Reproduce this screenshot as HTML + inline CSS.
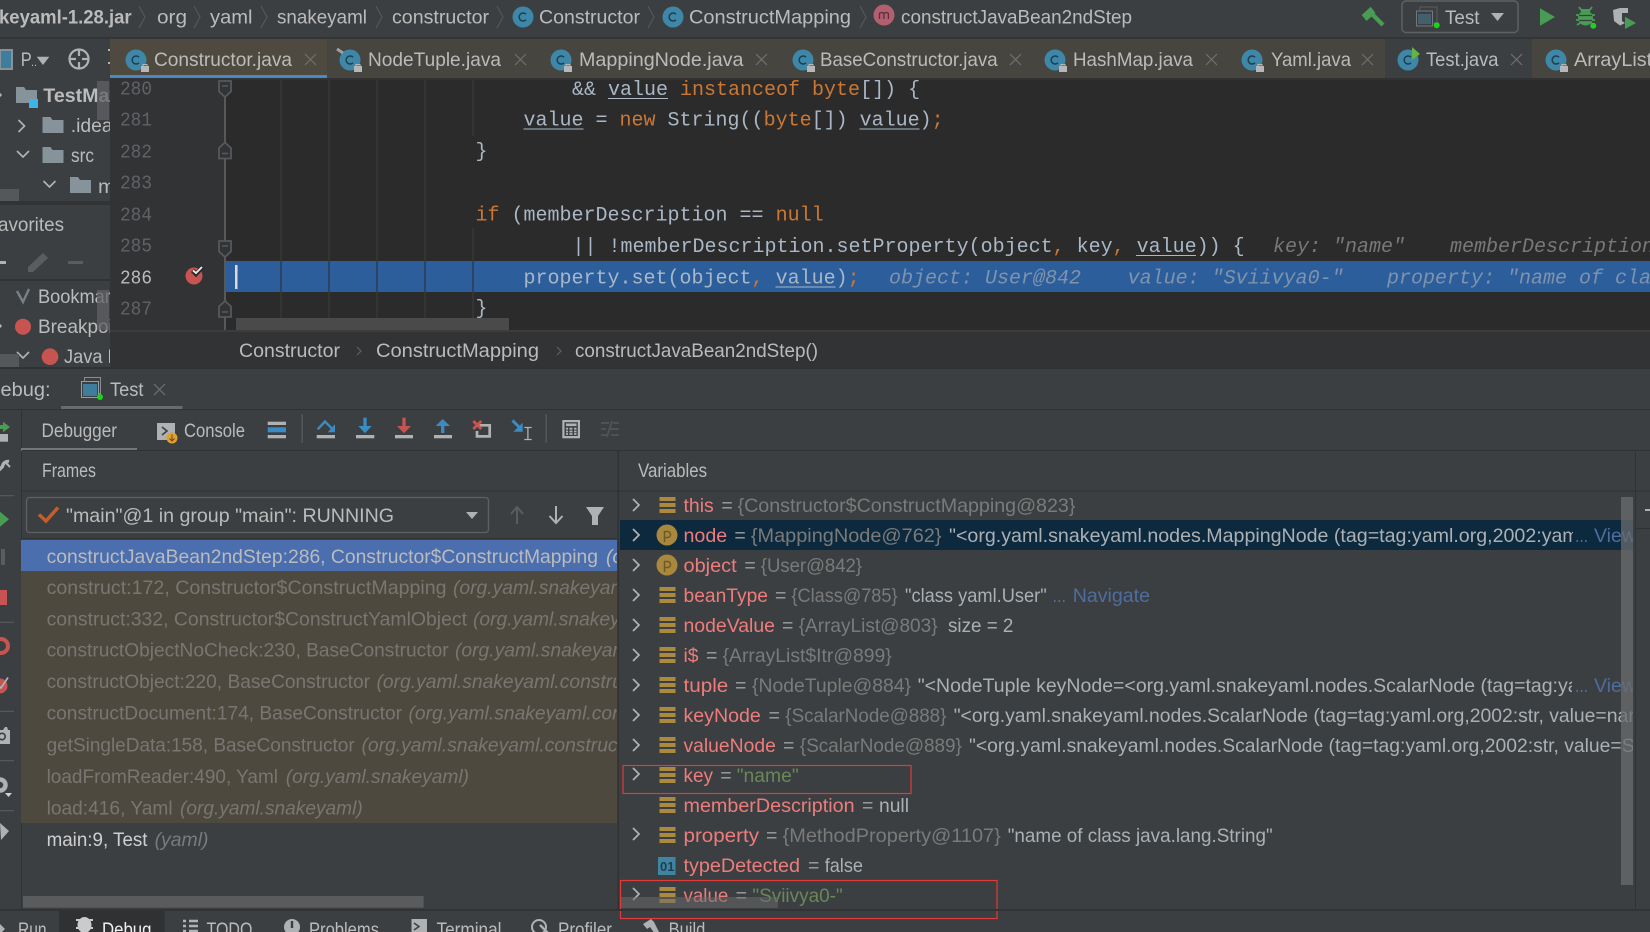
<!DOCTYPE html>
<html><head><meta charset="utf-8"><style>
html,body{margin:0;padding:0;background:#3c3f41;width:1650px;height:932px;overflow:hidden}
svg{display:block}
text{white-space:pre;font-family:"Liberation Sans",sans-serif;font-size:19.5px;fill:#bbb}
.m,.m text{font-family:"Liberation Mono",monospace;font-size:20px;fill:#a9b7c6}
.k{fill:#cc7832}
.ln{font-family:"Liberation Mono",monospace;font-size:19px;fill:#606366}
.h{font-family:"Liberation Mono",monospace;font-size:20px;font-style:italic;fill:#787878}
.h2{font-family:"Liberation Mono",monospace;font-size:20px;font-style:italic;fill:#7f93ab}
.n{fill:#ee7c7c}.e{fill:#a0a0a0}.g{fill:#7a7a7a}.s{fill:#aab0b4}.gr{fill:#6a8759}.l{fill:#4e6d9f}
.d{fill:#787670}.i{font-style:italic}.w{fill:#d5d5d5}
</style></head><body>
<svg width="1650" height="932" viewBox="0 0 1650 932" xmlns="http://www.w3.org/2000/svg">
<defs>
<symbol id="ci" viewBox="0 0 22 22" width="22" height="22"><circle cx="11" cy="11" r="10.5" fill="#3e87a8"/><path d="M14 8.2A4 4 0 1 0 14 13.8" fill="none" stroke="#1d3f4f" stroke-width="1.5"/></symbol>
<symbol id="lk" viewBox="0 0 8 9" width="8" height="9"><rect y="3" width="8" height="6" fill="#b5b7b9"/><path d="M2 3V1.5h4V3" fill="none" stroke="#b5b7b9"/></symbol>
<symbol id="bars" viewBox="0 0 16 16" width="16" height="16"><rect width="16" height="4" y="0" fill="#ab8a40"/><rect width="16" height="4" y="6" fill="#ab8a40"/><rect width="16" height="4" y="12" fill="#ab8a40"/></symbol>
<symbol id="p" viewBox="0 0 22 22" width="22" height="22"><circle cx="11" cy="11" r="10.5" fill="#a9873d"/><path d="M8.5 18V7M8.5 7.5h3a3 3 0 0 1 0 6H8.5" fill="none" stroke="#6b5a2c" stroke-width="1.5"/></symbol>
<symbol id="chev" viewBox="0 0 8 14" width="8" height="14"><path d="M1 1L7 7L1 13" fill="none" stroke="#afb1b3" stroke-width="1.7"/></symbol>
<symbol id="chd" viewBox="0 0 14 8" width="14" height="8"><path d="M1 1L7 7L13 1" fill="none" stroke="#afb1b3" stroke-width="1.7"/></symbol>
<symbol id="fold" viewBox="0 0 14 18" width="14" height="18"><path d="M1 1H13V11.5L7 17L1 11.5Z" fill="#313335" stroke="#56585a" stroke-width="1.8"/><path d="M4 6H10" stroke="#56585a" stroke-width="1.6"/></symbol>
<symbol id="foldu" viewBox="0 0 14 18" width="14" height="18"><path d="M1 17H13V6.5L7 1L1 6.5Z" fill="#313335" stroke="#56585a" stroke-width="1.8"/><path d="M4 12H10" stroke="#56585a" stroke-width="1.6"/></symbol>
<symbol id="fd" viewBox="0 0 21 16" width="21" height="16"><path d="M0 0H8L10 3H21V16H0Z" fill="#87939b"/></symbol>
<symbol id="cfg" viewBox="0 0 22 23" width="22" height="23"><rect x="3.5" y="0.5" width="16" height="16" fill="none" stroke="#8a8d8f"/><rect x="0.5" y="4.5" width="17" height="16" fill="#3c3f41" stroke="#9a9d9f"/><rect x="2" y="7" width="14" height="12" fill="#3e7d9b"/><circle cx="19" cy="20" r="3" fill="#1fd01f"/></symbol>
<clipPath id="edc"><rect x="110" y="80" width="1540" height="251"/></clipPath>
<clipPath id="tabc"><rect x="0" y="39" width="1650" height="36"/></clipPath>
<clipPath id="sb"><rect x="0" y="80" width="110" height="288"/></clipPath>
<clipPath id="fr"><rect x="21" y="540" width="596" height="310"/></clipPath>
<clipPath id="v2"><rect x="620" y="495" width="1013" height="400"/></clipPath>
<clipPath id="bot"><rect x="0" y="911" width="1650" height="21"/></clipPath>
</defs>

<rect width="1650" height="932" fill="#3c3f41"/>
<!-- top bar -->
<rect y="37" width="1650" height="2" fill="#323436"/>
<text x="-1" y="23.5" font-weight="bold" textLength="132.6" lengthAdjust="spacingAndGlyphs">keyaml-1.28.jar</text>
<g fill="none" stroke="#56595b" stroke-width="1.1"><path d="M139 6L145 17L139 28"/><path d="M194 6L200 17L194 28"/><path d="M261 6L267 17L261 28"/><path d="M376 6L382 17L376 28"/><path d="M497 6L503 17L497 28"/><path d="M648 6L654 17L648 28"/><path d="M860 6L866 17L860 28"/></g>
<text x="157" y="23.5" textLength="30" lengthAdjust="spacingAndGlyphs">org</text>
<text x="210" y="23.5" textLength="42.5" lengthAdjust="spacingAndGlyphs">yaml</text>
<text x="277" y="23.5" textLength="90" lengthAdjust="spacingAndGlyphs">snakeyaml</text>
<text x="392" y="23.5" textLength="97" lengthAdjust="spacingAndGlyphs">constructor</text>
<use href="#ci" x="512" y="6"/>
<text x="539" y="23.5" textLength="101" lengthAdjust="spacingAndGlyphs">Constructor</text>
<use href="#ci" x="662" y="6"/>
<text x="689" y="23.5" textLength="162" lengthAdjust="spacingAndGlyphs">ConstructMapping</text>
<circle cx="884" cy="15" r="10.5" fill="#b0606f"/><path d="M879.5 19V12.5M879.5 13.5q2.2-2 4.4 0V19M884 13.5q2.2-2 4.4 0V19" fill="none" stroke="#5e2f3a" stroke-width="1.3"/>
<text x="901" y="23.5" textLength="231" lengthAdjust="spacingAndGlyphs">constructJavaBean2ndStep</text>
<path d="M1361.7 15L1370.7 6.7L1375.5 13L1366.5 21Z" fill="#499c54"/><path d="M1371 13L1383 25" stroke="#499c54" stroke-width="4.2"/>
<rect x="1402" y="1" width="116" height="31.5" rx="4" fill="#3c3f41" stroke="#5e6264" stroke-width="1.4"/>
<rect x="1420" y="7" width="17" height="16" fill="none" stroke="#5a5d5f"/>
<rect x="1416.5" y="11" width="16" height="15" fill="#3c3f41" stroke="#75787a"/><rect x="1418" y="14" width="13" height="10" fill="#44606d"/>
<circle cx="1436.7" cy="25.3" r="3" fill="#1fd01f"/>
<text x="1445" y="24" textLength="34.5" lengthAdjust="spacingAndGlyphs">Test</text>
<path d="M1491 13H1504L1497.5 21Z" fill="#afb1b3"/>
<path d="M1540 8.3L1555 17L1540 25.7Z" fill="#499c54"/>
<g fill="#499c54"><ellipse cx="1585.5" cy="18" rx="7.5" ry="7.5"/><rect x="1581" y="9" width="9" height="5"/></g><path d="M1579 7L1582 11M1592 7L1589 11M1576 15H1595M1576 20H1595M1577 25L1580 23M1594 25L1591 23" stroke="#499c54" stroke-width="1.8" fill="none"/><path d="M1579 15.5H1592M1579 20.5H1592" stroke="#3c3f41" stroke-width="1.2"/><circle cx="1593.3" cy="25.7" r="3" fill="#1fd01f"/>
<path d="M1613 10L1620 8H1628V13H1622V21L1625 23L1620 25.5L1614 21Z" fill="#afb1b3"/><path d="M1625 16.7L1636 23L1625 29Z" fill="#499c54"/>

<!-- tab bar -->
<rect x="110" y="39" width="1540" height="39" fill="#46453f"/>
<rect x="110" y="39" width="217" height="36" fill="#4e4a3f"/>
<rect x="110" y="75" width="217" height="5" fill="#4a88c7"/>
<rect x="1385" y="39" width="147" height="39" fill="#3c3f41"/>
<rect x="110" y="78" width="1540" height="2" fill="#323232"/>
<g clip-path="url(#tabc)">
<use href="#ci" x="125" y="49"/><use href="#lk" x="141" y="63"/>
<text x="154" y="66" textLength="138" lengthAdjust="spacingAndGlyphs">Constructor.java</text>
<use href="#ci" x="339" y="49"/><use href="#lk" x="354" y="63"/><path d="M337 49L343 53" stroke="#9aa0a3" stroke-width="3"/>
<text x="368" y="66" textLength="133" lengthAdjust="spacingAndGlyphs">NodeTuple.java</text>
<use href="#ci" x="550" y="49"/><use href="#lk" x="564" y="63"/>
<text x="579" y="66" textLength="164.5" lengthAdjust="spacingAndGlyphs">MappingNode.java</text>
<use href="#ci" x="792" y="49"/><use href="#lk" x="807" y="63"/>
<text x="820" y="66" textLength="177.6" lengthAdjust="spacingAndGlyphs">BaseConstructor.java</text>
<use href="#ci" x="1044" y="49"/><use href="#lk" x="1059" y="63"/>
<text x="1073" y="66" textLength="120" lengthAdjust="spacingAndGlyphs">HashMap.java</text>
<use href="#ci" x="1241" y="49"/><use href="#lk" x="1256" y="63"/>
<text x="1271" y="66" textLength="80" lengthAdjust="spacingAndGlyphs">Yaml.java</text>
<use href="#ci" x="1397" y="49"/><path d="M1412 47L1420 54L1412 60Z" fill="#62b543"/>
<text x="1426" y="66" textLength="72.5" lengthAdjust="spacingAndGlyphs">Test.java</text>
<use href="#ci" x="1545" y="49"/><use href="#lk" x="1560" y="63"/>
<text x="1574" y="66" textLength="120" lengthAdjust="spacingAndGlyphs">ArrayList.java</text>
<g stroke="#6f7173" stroke-width="1.2" fill="none">
<path d="M305 54L316 65M316 54L305 65"/><path d="M515 54L526 65M526 54L515 65"/><path d="M756 54L767 65M767 54L756 65"/><path d="M1010 54L1021 65M1021 54L1010 65"/><path d="M1206 54L1217 65M1217 54L1206 65"/><path d="M1362 54L1373 65M1373 54L1362 65"/><path d="M1511 54L1522 65M1522 54L1511 65"/>
</g></g>

<!-- left project sidebar -->
<rect x="0" y="50" width="12" height="19" fill="#3e7d9b" stroke="#87939b" stroke-width="2"/>
<text x="20.7" y="66" textLength="11" lengthAdjust="spacingAndGlyphs">P</text><text x="31" y="66" style="font-size:12px" textLength="6" lengthAdjust="spacingAndGlyphs">..</text>
<path d="M36.7 56.7H49.3L43 65Z" fill="#afb1b3"/>
<circle cx="79" cy="59" r="9.5" fill="none" stroke="#afb1b3" stroke-width="2.2"/><path d="M79 49V56M79 62V69M69 59H76M82 59H89" stroke="#afb1b3" stroke-width="2.2"/>
<path d="M108 50H110M108 63H110" stroke="#afb1b3" stroke-width="2"/>
<g clip-path="url(#sb)">
<path d="M-3 91L1 95L-3 99" fill="none" stroke="#afb1b3" stroke-width="1.6"/>
<use href="#fd" x="16" y="87"/><rect x="29" y="99" width="9" height="9" fill="#3eb3e5"/>
<text x="43.3" y="102" font-weight="bold" textLength="100" lengthAdjust="spacingAndGlyphs">TestMaven</text>
<use href="#chev" x="17.5" y="119"/>
<use href="#fd" x="42.5" y="117"/><text x="70.7" y="132" textLength="42" lengthAdjust="spacingAndGlyphs">.idea</text>
<use href="#chd" x="16" y="150"/>
<use href="#fd" x="42.5" y="147"/><text x="71" y="162" textLength="23" lengthAdjust="spacingAndGlyphs">src</text>
<use href="#chd" x="42.5" y="180"/>
<use href="#fd" x="70" y="177"/><text x="98" y="193" textLength="45" lengthAdjust="spacingAndGlyphs">main</text>
<rect x="97" y="81" width="12" height="39" fill="#606264" fill-opacity="0.75"/>
<rect x="0" y="189" width="19" height="12" fill="#55585a"/>
<rect y="201" width="110" height="4" fill="#313335"/>
<text x="-2" y="231" textLength="66" lengthAdjust="spacingAndGlyphs">avorites</text>
<rect y="261" x="0" width="6" height="3" fill="#afb1b3"/>
<path d="M28 267L43 253L48 258L33 272L28 272Z" fill="#5a5d5f"/>
<rect x="68" y="261" width="15" height="3" fill="#5a5d5f"/>
<rect y="279" width="110" height="2" fill="#313335"/>
<path d="M17 291L23 302L29 289" fill="none" stroke="#768089" stroke-width="2.4"/>
<text x="38" y="303" textLength="91" lengthAdjust="spacingAndGlyphs">Bookmarks</text>
<circle cx="23" cy="326.7" r="8" fill="#c75450"/>
<text x="38" y="333" textLength="100" lengthAdjust="spacingAndGlyphs">Breakpoints</text>
<path d="M-3 322L1 326L-3 330" fill="none" stroke="#afb1b3" stroke-width="1.6"/>
<use href="#chd" x="16" y="351"/>
<circle cx="50" cy="356.7" r="8.3" fill="#c75450"/>
<text x="64" y="363" textLength="78" lengthAdjust="spacingAndGlyphs">Java Line</text>
<rect x="97" y="290" width="12" height="40" fill="#606264" fill-opacity="0.75"/>
<rect x="0" y="354" width="19" height="13" fill="#55585a"/>
</g>
<rect x="0" y="367" width="1650" height="2" fill="#323232"/>

<!-- editor -->
<rect x="110" y="80" width="115" height="251" fill="#313335"/>
<rect x="225" y="80" width="1425" height="251" fill="#2b2b2b"/>
<g clip-path="url(#edc)">
<g stroke="#3d3d3d"><path d="M281 80V331M329 80V331M377 80V331M425 80V331M473 80V136M473 228V331"/></g>
<rect x="226" y="261" width="1424" height="31" fill="#2d5e9c"/>
<g stroke="#2b2b2b"><path d="M281 261V292M329 261V292M377 261V292M425 261V292M473 261V292"/></g>
<path d="M225 80V331" stroke="#56585a" stroke-width="2"/>
<rect x="235" y="265" width="2.5" height="24" fill="#d8dce0"/>
<use href="#fold" x="218" y="80"/><use href="#foldu" x="218" y="141.5"/><use href="#fold" x="218" y="240"/><use href="#foldu" x="218" y="300"/>
<text class="ln" x="120" y="94.5" textLength="32" lengthAdjust="spacingAndGlyphs">280</text>
<text class="ln" x="120" y="125.5" textLength="32" lengthAdjust="spacingAndGlyphs">281</text>
<text class="ln" x="120" y="157.5" textLength="32" lengthAdjust="spacingAndGlyphs">282</text>
<text class="ln" x="120" y="188.5" textLength="32" lengthAdjust="spacingAndGlyphs">283</text>
<text class="ln" x="120" y="220.5" textLength="32" lengthAdjust="spacingAndGlyphs">284</text>
<text class="ln" x="120" y="251.5" textLength="32" lengthAdjust="spacingAndGlyphs">285</text>
<text class="ln" x="120" y="283.5" textLength="32" lengthAdjust="spacingAndGlyphs" style="fill:#bcbcbc">286</text>
<text class="ln" x="120" y="314.5" textLength="32" lengthAdjust="spacingAndGlyphs">287</text>
<circle cx="194" cy="276" r="8.5" fill="#c75450"/><path d="M192.5 270.5L196 274L203 266.5" fill="none" stroke="#2b2b2b" stroke-width="4.5"/><path d="M193 270.5L196 273L202 267" fill="none" stroke="#eceff1" stroke-width="1.8"/>
<g class="m">
<text x="572" y="95">&amp;&amp; value <tspan class="k">instanceof byte</tspan>[]) {</text>
<text x="523.5" y="125.5">value = <tspan class="k">new</tspan> String((<tspan class="k">byte</tspan>[]) value)<tspan class="k">;</tspan></text>
<text x="475.5" y="157">}</text>
<text x="475.5" y="220.5"><tspan class="k">if</tspan> (memberDescription == <tspan class="k">null</tspan></text>
<text x="572.5" y="252">|| !memberDescription.setProperty(object<tspan class="k">,</tspan> key<tspan class="k">,</tspan> value)) {</text>
<text x="523.5" y="283.5">property.set(object<tspan class="k">,</tspan> value)<tspan class="k">;</tspan></text>
<text x="475.5" y="314">}</text>
</g>
<g stroke="#a9b7c6" stroke-width="1"><path d="M608 98.5H668M523.5 129H583.5M859.5 129H919.5M1136 255.5H1196M775.5 287H835.5"/></g>
<text class="h" x="1273" y="252">key: "name"</text>
<text class="h" x="1450" y="252">memberDescription: null</text>
<text class="h2" x="889" y="283.5">object: User@842</text>
<text class="h2" x="1127.6" y="283.5">value: "Sviivya0-"</text>
<text class="h2" x="1387" y="283.5">property: "name of class java.lang.String"</text>
<rect x="236" y="318" width="273" height="12" fill="#4a4a4a"/>
</g>

<!-- editor breadcrumb -->
<rect x="110" y="331" width="1540" height="36" fill="#313335"/>
<rect x="110" y="330" width="1540" height="2" fill="#3a3c3e"/>
<text x="239" y="357" textLength="101" lengthAdjust="spacingAndGlyphs">Constructor</text>
<path d="M357 347L361 351L357 355" fill="none" stroke="#5e6163" stroke-width="1.2"/>
<text x="376" y="357" textLength="163" lengthAdjust="spacingAndGlyphs">ConstructMapping</text>
<path d="M557 347L561 351L557 355" fill="none" stroke="#5e6163" stroke-width="1.2"/>
<text x="575" y="357" textLength="243" lengthAdjust="spacingAndGlyphs">constructJavaBean2ndStep()</text>

<!-- debug header -->
<text x="-14" y="396" textLength="64.6" lengthAdjust="spacingAndGlyphs">Debug:</text>
<use href="#cfg" x="81" y="377"/>
<text x="110" y="396" textLength="33.5" lengthAdjust="spacingAndGlyphs">Test</text>
<path d="M154 384L165 395M165 384L154 395" stroke="#6f7173" stroke-width="1.2"/>
<rect x="61" y="406" width="121.5" height="3" fill="#686b6e"/>
<rect x="0" y="409" width="1650" height="1" fill="#323232"/>
<rect x="21" y="410" width="1" height="500" fill="#323232"/>

<!-- debug toolbar -->
<text x="41.5" y="437" textLength="75.5" lengthAdjust="spacingAndGlyphs">Debugger</text>
<rect x="21" y="448" width="116" height="3" fill="#74777a"/>
<rect x="157" y="423" width="18" height="17" fill="#afb1b3"/><path d="M162 427L167 431L162 435" fill="none" stroke="#3c3f41" stroke-width="1.6"/><circle cx="172" cy="438" r="5.5" fill="#e0a030"/><path d="M172 434.5V441M169.5 438.5L172 441L174.5 438.5" fill="none" stroke="#6a4a10"/>
<text x="184" y="437" textLength="61" lengthAdjust="spacingAndGlyphs">Console</text>
<rect x="267.7" y="421.7" width="18.3" height="3.3" fill="#afb1b3"/><rect x="267.7" y="427.3" width="18.3" height="5" fill="#3a8cc4"/><rect x="267.7" y="435" width="18.3" height="3.3" fill="#afb1b3"/>
<rect x="301.5" y="414" width="1.4" height="29" fill="#55585a"/>
<!-- step over -->
<path d="M317.7 429.3L325 421.5L331.7 428.3" fill="none" stroke="#3a8cc4" stroke-width="2.4"/><path d="M335 424.3V432.3H327.7Z" fill="#3a8cc4"/><rect x="316.7" y="435" width="18.3" height="3.3" fill="#afb1b3"/>
<!-- step into -->
<path d="M365 417.7V427" stroke="#3a8cc4" stroke-width="3.3"/><path d="M358.3 426H371.7L365 433.3Z" fill="#3a8cc4"/><rect x="356" y="435" width="18.3" height="3.3" fill="#afb1b3"/>
<!-- force step into -->
<path d="M404 417.7V427" stroke="#c75450" stroke-width="3.3"/><path d="M397 426H411L404 433.3Z" fill="#c75450"/><rect x="395" y="435" width="18" height="3.3" fill="#afb1b3"/>
<!-- step out -->
<path d="M442.7 425V433" stroke="#3a8cc4" stroke-width="3.3"/><path d="M435.7 426H450L442.7 419Z" fill="#3a8cc4"/><rect x="434" y="435" width="18" height="3.3" fill="#afb1b3"/>
<!-- drop frame -->
<path d="M478 425.3H489.7V436.4H477V431" fill="none" stroke="#afb1b3" stroke-width="2.7"/><path d="M473.3 421L481.3 429M481.3 421L473.3 429" stroke="#c75450" stroke-width="2.8"/>
<!-- run to cursor -->
<path d="M512.5 420.5L520 428" stroke="#3a8cc4" stroke-width="3"/><path d="M522.7 422.7V431.7H513.3Z" fill="#3a8cc4"/><path d="M524.3 427.5H531.7M527.9 427.5V439.5M524.3 439.5H531.7" fill="none" stroke="#afb1b3" stroke-width="1.3"/>
<rect x="545.5" y="414" width="1.4" height="29" fill="#55585a"/>
<!-- calculator -->
<rect x="562.3" y="420" width="17.7" height="18.3" fill="#afb1b3"/><rect x="564.5" y="422.2" width="13.3" height="13.8" fill="#3c3f41"/><rect x="566" y="423.5" width="10.5" height="2.6" fill="#afb1b3"/><path d="M566 428.7H568M569.4 428.7H572.5M574 428.7H576.5M566 431.5H568M569.4 431.5H572.5M574 431.5H576.5M566 434H568M569.4 434H572.5M574 434H576.5" stroke="#afb1b3" stroke-width="1.8"/>
<path d="M601 423H609M613 423H619M601 429H606M610 429H619M601 435H607M611 435H619M612 421L607 437" stroke="#4f5254" stroke-width="2" fill="none"/>
<rect x="22" y="490.5" width="1628" height="1" fill="#323232"/>
<rect x="22" y="450" width="1628" height="1" fill="#323232"/>
<rect x="1635" y="451" width="1" height="458" fill="#323232"/>
<rect x="1636" y="528" width="14" height="1" fill="#323232"/>
<rect x="1645" y="509" width="5" height="2" fill="#afb1b3"/>
<rect x="617.5" y="451" width="1.5" height="458" fill="#323232"/>

<!-- left debug strip -->
<path d="M3 421.7L10 427L3 432.3V429H-2V425H3Z" fill="#499c54"/><rect x="0" y="434" width="8" height="7.7" fill="#afb1b3"/>
<path d="M9 461.5A5.5 5.5 0 0 0 2.5 466.5L-1 470" fill="none" stroke="#afb1b3" stroke-width="3.4"/><path d="M6 463L10 467" stroke="#afb1b3" stroke-width="2"/>
<rect y="495" width="14" height="1.3" fill="#55585a"/>
<path d="M0 511.7L9 519.2L0 526.7Z" fill="#499c54"/>
<rect x="1" y="549" width="4" height="16" fill="#5a5d5f"/>
<rect x="0" y="590" width="7" height="15" fill="#c75450"/>
<rect y="621.7" width="14" height="1.3" fill="#55585a"/>
<circle cx="1" cy="646" r="7" fill="none" stroke="#c75450" stroke-width="4"/>
<circle cx="0" cy="686" r="7.5" fill="#c75450"/><path d="M-2 685L1 688L8 677.5" fill="none" stroke="#afb1b3" stroke-width="1.8"/>
<rect y="710.7" width="14" height="1.3" fill="#55585a"/>
<path d="M0 730H3L5 727H7L8 730H10V744H0Z" fill="#afb1b3"/><circle cx="2" cy="736.5" r="3.2" fill="none" stroke="#3c3f41" stroke-width="1.6"/>
<rect y="760" width="14" height="1.3" fill="#55585a"/>
<circle cx="0" cy="785" r="5.5" fill="none" stroke="#afb1b3" stroke-width="4.5"/><path d="M5 793H12L8.5 797Z" fill="#d0d2d4"/>
<rect y="810" width="14" height="1.3" fill="#55585a"/>
<path d="M0 823L9 831L1 840Z" fill="#afb1b3"/>

<!-- frames -->
<text x="42" y="477" textLength="54" lengthAdjust="spacingAndGlyphs">Frames</text>
<rect x="26.5" y="497.5" width="462" height="35" rx="3" fill="none" stroke="#5e6163" stroke-width="1.3"/>
<path d="M39 514.5L46 521L58 507.5" fill="none" stroke="#c75c28" stroke-width="3.5"/>
<text x="66" y="522" textLength="328" lengthAdjust="spacingAndGlyphs">"main"@1 in group "main": RUNNING</text>
<path d="M466 512H478L472 519Z" fill="#afb1b3"/>
<path d="M517 508V524M511 514L517 507L523 514" fill="none" stroke="#5a5c5e" stroke-width="2"/>
<path d="M556 506V523M549.5 516L556 523L562.5 516" fill="none" stroke="#afb1b3" stroke-width="2"/>
<path d="M586 507H604L598 516V525H592V516Z" fill="#afb1b3"/>
<rect x="21" y="538" width="596" height="1" fill="#323232"/>
<rect x="21" y="540" width="596" height="31" fill="#4b6eaf"/>
<rect x="21" y="571" width="596" height="252" fill="#4d493e"/>
<g clip-path="url(#fr)">
<text x="46.6" y="563" textLength="551.4" lengthAdjust="spacingAndGlyphs">constructJavaBean2ndStep:286, Constructor$ConstructMapping</text><text x="606" y="563" class="i" textLength="285" lengthAdjust="spacingAndGlyphs">(org.yaml.snakeyaml.constructor)</text>
<text class="d" x="46.6" y="594" textLength="400" lengthAdjust="spacingAndGlyphs">construct:172, Constructor$ConstructMapping</text><text class="d i" x="453" y="594" textLength="285" lengthAdjust="spacingAndGlyphs">(org.yaml.snakeyaml.constructor)</text>
<text class="d" x="46.6" y="625.5" textLength="420.4" lengthAdjust="spacingAndGlyphs">construct:332, Constructor$ConstructYamlObject</text><text class="d i" x="473" y="625.5" textLength="285" lengthAdjust="spacingAndGlyphs">(org.yaml.snakeyaml.constructor)</text>
<text class="d" x="46.6" y="656.5" textLength="402" lengthAdjust="spacingAndGlyphs">constructObjectNoCheck:230, BaseConstructor</text><text class="d i" x="455" y="656.5" textLength="285" lengthAdjust="spacingAndGlyphs">(org.yaml.snakeyaml.constructor)</text>
<text class="d" x="46.6" y="688" textLength="323.4" lengthAdjust="spacingAndGlyphs">constructObject:220, BaseConstructor</text><text class="d i" x="376.5" y="688" textLength="285" lengthAdjust="spacingAndGlyphs">(org.yaml.snakeyaml.constructor)</text>
<text class="d" x="46.6" y="719.5" textLength="355.4" lengthAdjust="spacingAndGlyphs">constructDocument:174, BaseConstructor</text><text class="d i" x="408.5" y="719.5" textLength="285" lengthAdjust="spacingAndGlyphs">(org.yaml.snakeyaml.constructor)</text>
<text class="d" x="46.6" y="751.5" textLength="308.1" lengthAdjust="spacingAndGlyphs">getSingleData:158, BaseConstructor</text><text class="d i" x="361.5" y="751.5" textLength="285" lengthAdjust="spacingAndGlyphs">(org.yaml.snakeyaml.constructor)</text>
<text class="d" x="46.6" y="783" textLength="231.4" lengthAdjust="spacingAndGlyphs">loadFromReader:490, Yaml</text><text class="d i" x="285.8" y="783" textLength="183.2" lengthAdjust="spacingAndGlyphs">(org.yaml.snakeyaml)</text>
<text class="d" x="46.6" y="814.5" textLength="126" lengthAdjust="spacingAndGlyphs">load:416, Yaml</text><text class="d i" x="180" y="814.5" textLength="182.7" lengthAdjust="spacingAndGlyphs">(org.yaml.snakeyaml)</text>
<text x="46.6" y="846" textLength="100.9" lengthAdjust="spacingAndGlyphs" style="fill:#cfcfcf">main:9, Test</text><text class="g i" x="154.6" y="846" textLength="53.9" lengthAdjust="spacingAndGlyphs">(yaml)</text>
</g>
<rect x="23" y="896" width="400.6" height="11.7" fill="#595b5d"/>

<!-- variables -->
<text x="638" y="477" textLength="69" lengthAdjust="spacingAndGlyphs">Variables</text>
<rect x="620" y="520" width="1013" height="30" fill="#0d293e"/>
<use href="#chev" x="632" y="498"/><use href="#chev" x="632" y="528"/><use href="#chev" x="632" y="558"/><use href="#chev" x="632" y="588"/><use href="#chev" x="632" y="618"/><use href="#chev" x="632" y="648"/><use href="#chev" x="632" y="678"/><use href="#chev" x="632" y="708"/><use href="#chev" x="632" y="738"/><use href="#chev" x="632" y="767"/><use href="#chev" x="632" y="827"/><use href="#chev" x="632" y="887"/>
<use href="#bars" x="659.5" y="497"/><use href="#p" x="656" y="524"/><use href="#p" x="656" y="554"/><use href="#bars" x="659.5" y="587"/><use href="#bars" x="659.5" y="617"/><use href="#bars" x="659.5" y="647"/><use href="#bars" x="659.5" y="677"/><use href="#bars" x="659.5" y="707"/><use href="#bars" x="659.5" y="737"/><use href="#bars" x="659.5" y="767"/><use href="#bars" x="659.5" y="797"/><use href="#bars" x="659.5" y="827"/><use href="#bars" x="659.5" y="887"/>
<rect x="658" y="857" width="17.5" height="18" fill="#3f84a0"/><text x="660" y="871" style="fill:#1d3f4f;font-size:13px;font-weight:bold">01</text>
<g clip-path="url(#v2)">
<text class="n" x="683.5" y="512" textLength="30.3" lengthAdjust="spacingAndGlyphs">this</text><text class="e" x="721.4" y="512">=</text><text class="g" x="737.5" y="512" textLength="337.9" lengthAdjust="spacingAndGlyphs">{Constructor$ConstructMapping@823}</text>

<text class="n" x="683.5" y="542" textLength="43.7" lengthAdjust="spacingAndGlyphs">node</text><text class="e" x="734.4" y="542">=</text><text class="g" x="750.9" y="542" textLength="190.6" lengthAdjust="spacingAndGlyphs">{MappingNode@762}</text><text class="s" x="949" y="542" textLength="592.7" lengthAdjust="spacingAndGlyphs">"&lt;org.yaml.snakeyaml.nodes.MappingNode (tag=tag:yaml.org,2002:</text>
<text class="n" x="683.5" y="572" textLength="53.2" lengthAdjust="spacingAndGlyphs">object</text><text class="e" x="744.4" y="572">=</text><text class="g" x="760.8" y="572" textLength="101.2" lengthAdjust="spacingAndGlyphs">{User@842}</text>

<text class="n" x="683.5" y="602" textLength="84.5" lengthAdjust="spacingAndGlyphs">beanType</text><text class="e" x="775" y="602">=</text><text class="g" x="791.5" y="602" textLength="106" lengthAdjust="spacingAndGlyphs">{Class@785}</text><text class="s" x="905" y="602" textLength="141.7" lengthAdjust="spacingAndGlyphs">"class yaml.User"</text><text class="l" x="1052.5" y="602" textLength="13.5" lengthAdjust="spacingAndGlyphs">...</text><text class="l" x="1072.7" y="602" textLength="77.3" lengthAdjust="spacingAndGlyphs">Navigate</text>

<text class="n" x="683.5" y="632" textLength="91.5" lengthAdjust="spacingAndGlyphs">nodeValue</text><text class="e" x="782" y="632">=</text><text class="g" x="798.7" y="632" textLength="138.9" lengthAdjust="spacingAndGlyphs">{ArrayList@803}</text><text class="s" x="948" y="632" textLength="65.4" lengthAdjust="spacingAndGlyphs">size = 2</text>

<text class="n" x="683.5" y="662" textLength="15" lengthAdjust="spacingAndGlyphs">i$</text><text class="e" x="706" y="662">=</text><text class="g" x="722.6" y="662" textLength="169.1" lengthAdjust="spacingAndGlyphs">{ArrayList$Itr@899}</text>

<text class="n" x="683.5" y="692" textLength="44.8" lengthAdjust="spacingAndGlyphs">tuple</text><text class="e" x="735" y="692">=</text><text class="g" x="752" y="692" textLength="159" lengthAdjust="spacingAndGlyphs">{NodeTuple@884}</text><text class="s" x="917.7" y="692" textLength="640.3" lengthAdjust="spacingAndGlyphs">"&lt;NodeTuple keyNode=&lt;org.yaml.snakeyaml.nodes.ScalarNode (tag=tag:</text>

<text class="n" x="683.5" y="722" textLength="77.3" lengthAdjust="spacingAndGlyphs">keyNode</text><text class="e" x="768.5" y="722">=</text><text class="g" x="785.3" y="722" textLength="161.1" lengthAdjust="spacingAndGlyphs">{ScalarNode@888}</text><text class="s" x="953.7" y="722" textLength="653" lengthAdjust="spacingAndGlyphs">"&lt;org.yaml.snakeyaml.nodes.ScalarNode (tag=tag:yaml.org,2002:str, value=</text><text class="s" x="1606.7" y="722">name</text>

<text class="n" x="683.5" y="752" textLength="92.3" lengthAdjust="spacingAndGlyphs">valueNode</text><text class="e" x="783" y="752">=</text><text class="g" x="799.9" y="752" textLength="161.9" lengthAdjust="spacingAndGlyphs">{ScalarNode@889}</text><text class="s" x="969" y="752" textLength="652.7" lengthAdjust="spacingAndGlyphs">"&lt;org.yaml.snakeyaml.nodes.ScalarNode (tag=tag:yaml.org,2002:str, value=</text><text class="s" x="1621.7" y="752">Sviivya0-</text>

<text class="n" x="683.5" y="782" textLength="29.5" lengthAdjust="spacingAndGlyphs">key</text><text class="e" x="720.3" y="782">=</text><text class="gr" x="736.7" y="782" textLength="62" lengthAdjust="spacingAndGlyphs">"name"</text>

<text class="n" x="683.5" y="812" textLength="171.1" lengthAdjust="spacingAndGlyphs">memberDescription</text><text class="e" x="862" y="812">=</text><text class="s" x="879" y="812" textLength="30" lengthAdjust="spacingAndGlyphs">null</text>

<text class="n" x="683.5" y="842" textLength="75.5" lengthAdjust="spacingAndGlyphs">property</text><text class="e" x="766" y="842">=</text><text class="g" x="782.6" y="842" textLength="218.2" lengthAdjust="spacingAndGlyphs">{MethodProperty@1107}</text><text class="s" x="1007.7" y="842" textLength="265" lengthAdjust="spacingAndGlyphs">"name of class java.lang.String"</text>

<text class="n" x="683.5" y="872" textLength="116.5" lengthAdjust="spacingAndGlyphs">typeDetected</text><text class="e" x="808" y="872">=</text><text class="s" x="824.7" y="872" textLength="38.3" lengthAdjust="spacingAndGlyphs">false</text>
</g>
<text class="n" x="683.5" y="902" textLength="44.8" lengthAdjust="spacingAndGlyphs">value</text><text class="e" x="735.6" y="902">=</text><text class="gr" x="752.4" y="902" textLength="90.3" lengthAdjust="spacingAndGlyphs">"Sviivya0-"</text>
<g>
<clipPath id="y1"><rect x="1541" y="520" width="32" height="30"/></clipPath>
<clipPath id="y2"><rect x="1558" y="680" width="14" height="30"/></clipPath>
<text class="s" x="1541.7" y="542" clip-path="url(#y1)">yaml</text>
<text class="s" x="1558" y="692" clip-path="url(#y2)">yaml</text>
<text class="l" x="1575" y="542" textLength="13" lengthAdjust="spacingAndGlyphs">...</text><text class="l" x="1594" y="542" textLength="42" lengthAdjust="spacingAndGlyphs" clip-path="url(#v2)">View</text>
<text class="l" x="1575" y="692" textLength="13" lengthAdjust="spacingAndGlyphs">...</text><text class="l" x="1594" y="692" textLength="42" lengthAdjust="spacingAndGlyphs" clip-path="url(#v2)">View</text>
</g>
<rect x="1621" y="497" width="12" height="388" fill="#6a6c6e" fill-opacity="0.75"/>
<rect x="620" y="897" width="158" height="11" fill="#6a6c6e" fill-opacity="0.5"/>
<rect x="623" y="765.5" width="288" height="28" fill="none" stroke="#e03a3a" stroke-width="1.2"/>
<rect x="620.5" y="880.5" width="376.5" height="38" fill="none" stroke="#e03a3a" stroke-width="1.2"/>

<!-- bottom bar -->
<rect x="0" y="909" width="1650" height="2" fill="#313335"/>
<rect x="59" y="911" width="105.6" height="21" fill="#2f3133"/>
<g clip-path="url(#bot)">
<path d="M0 924L5 929L0 934Z" fill="#afb1b3"/>
<text x="18" y="936" textLength="28.6" lengthAdjust="spacingAndGlyphs">Run</text>
<ellipse cx="84.5" cy="925" rx="7" ry="8" fill="#c9cbcd"/><path d="M76 920H93M76 928H93" stroke="#c9cbcd" stroke-width="2"/>
<text x="102" y="936" textLength="49.5" lengthAdjust="spacingAndGlyphs" style="fill:#f0f0f0">Debug</text>
<path d="M183 921H186M189 921H198M183 926H186M189 926H198M183 931H186M189 931H198" stroke="#afb1b3" stroke-width="2.4"/>
<text x="206.5" y="936" textLength="45.9" lengthAdjust="spacingAndGlyphs">TODO</text>
<circle cx="292" cy="927" r="8" fill="#afb1b3"/><rect x="290.8" y="921" width="2.4" height="7" fill="#3c3f41"/>
<text x="309" y="936" textLength="70" lengthAdjust="spacingAndGlyphs">Problems</text>
<rect x="411.5" y="919" width="15.5" height="16" fill="#afb1b3"/><path d="M414 923L419 926.5L414 930" fill="none" stroke="#3c3f41" stroke-width="1.5"/>
<text x="436.5" y="936" textLength="65" lengthAdjust="spacingAndGlyphs">Terminal</text>
<circle cx="539" cy="927" r="7" fill="none" stroke="#afb1b3" stroke-width="2"/><path d="M540 925L549 934" stroke="#afb1b3" stroke-width="2.4"/>
<text x="558" y="936" textLength="54" lengthAdjust="spacingAndGlyphs">Profiler</text>
<path d="M643 924L651 919L654 922L660 934H655L650 927L647 929Z" fill="#afb1b3"/>
<text x="668.6" y="936" textLength="36.7" lengthAdjust="spacingAndGlyphs">Build</text>
</g>
</svg>
</body></html>
